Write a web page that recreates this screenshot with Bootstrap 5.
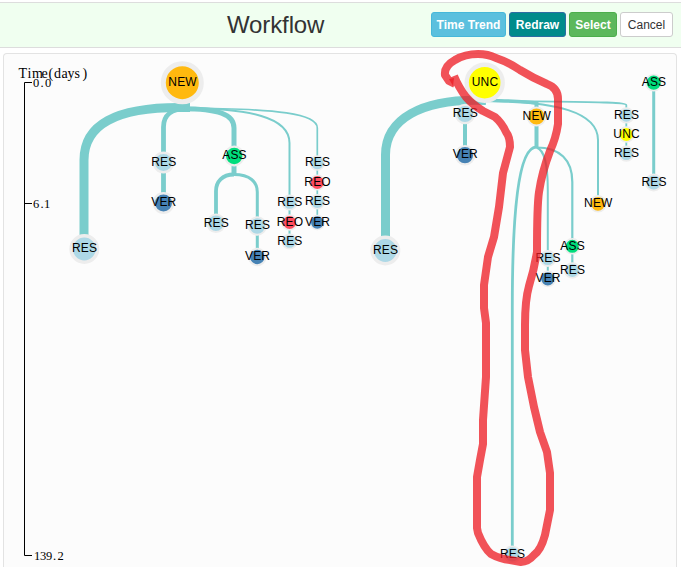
<!DOCTYPE html>
<html lang="en">
<head>
<meta charset="utf-8">
<meta name="viewport" content="width=device-width, initial-scale=1">
<title>Workflow</title>
<link href="https://cdn.jsdelivr.net/npm/bootstrap@5.3.0/dist/css/bootstrap.min.css" rel="stylesheet">
<style>
body{font-family:"Liberation Sans",Arial,sans-serif;color:#333;background:#fff}
.flow-page{height:567px;padding-top:2px}
.flow-head{height:46px;background:#f0fff0;border-top:1px solid #ddd;border-bottom:1px solid #ddd;padding:0 8px 0 227px}
.flow-head h1{font-size:24px;line-height:26px;font-weight:400;letter-spacing:-.12px}
.flow-btns{gap:3px;margin-bottom:2px}
.flow-btns .btn{font-size:12px;line-height:15px;height:25px;padding:3px 0 0;border-radius:3px;display:block}
.b-trend{width:75px;background:#5bc0de!important;border-color:#46b8da!important;color:#fff!important}
.b-redraw{width:57px;background:#008b8b!important;border-color:#2e6da4!important;color:#fff!important}
.b-select{width:48px;background:#5cb85c!important;border-color:#4cae4c!important;color:#fff!important}
.b-cancel{width:53px;background:#fff!important;border-color:#ccc!important;color:#333!important}
.flow-panel{margin:5px 4px 0 3px;height:514px;background:#fcfcfc;border:1px solid #e3e3e3;border-bottom:0;border-radius:4px 4px 0 0}
.flow-panel svg{display:block;overflow:visible}
.links path{fill:none;stroke:#7acdcc}
.nodes circle{stroke:#ededed}
.labels text{font-size:12px;text-anchor:middle;fill:#000}
.res{fill:#add8e6}.ver{fill:#4682b4}.new{fill:#ffb90f}.ass{fill:#00dd7c}.reo{fill:#ff4d5e}.unc{fill:#ff0}
.axis path{fill:none;stroke:#000}
.axis text{fill:#000;font-family:"Liberation Serif",serif;font-size:12.5px}
.axis .axis-title{font-size:14px}
</style>
</head>
<body>
<div class="flow-page">
<header class="flow-head d-flex align-items-center justify-content-between">
  <h1 class="mb-0">Workflow</h1>
  <div class="flow-btns d-flex">
    <button class="btn btn-info fw-bold b-trend">Time Trend</button>
    <button class="btn btn-primary fw-bold b-redraw">Redraw</button>
    <button class="btn btn-success fw-bold b-select">Select</button>
    <button class="btn btn-light b-cancel">Cancel</button>
  </div>
</header>
<main class="flow-panel">
<svg width="672" height="513" viewBox="4 54 672 513">
  <g class="axis">
    <path d="M32 82.5H24.5V555.5H32M24.5 203.5H32"/>
    <text class="axis-title" x="18.5 27.5 32 41.5 48.5 54 61.5 67.5 74.5 82.5" y="78">Time(days)</text>
    <text x="33 40.5 45" y="87">0.0</text>
    <text x="33 40.5 44" y="208">6.1</text>
    <text x="34 40 46 53 57.5" y="560">139.2</text>
  </g>
  <g class="links">
    <path stroke-width="9" d="M190 107.5H182C115 107 84 125 84 160V236"/>
    <path stroke-width="4.8" d="M186 108.7C172 108.7 163.5 115 163.5 127V195"/>
    <path stroke-width="5" d="M182 108.7C218 108.7 234 114 234 128V174"/>
    <path stroke-width="2" d="M182 108C250 108.5 289.5 117 289.5 143V240"/>
    <path stroke-width="1.7" d="M182 108C280 108.5 317.3 114 317.3 128V220"/>
    <path stroke-width="3.8" d="M234 174.5C222 174.5 216 182 216 191V218"/>
    <path stroke-width="3" d="M234 174.5C250 174.5 257.3 182 257.3 192V252"/>
    <path stroke-width="9" d="M486 100.5C420 98 385.5 120 385.5 155V238"/>
    <path stroke-width="4" d="M465 115V150"/>
    <path stroke-width="3.5" d="M480 100C505 101 522 101 537 103"/>
    <path stroke-width="1.8" d="M486 100.3C560 102.3 626.3 101 626.3 105V150"/>
    <path stroke-width="2" d="M486 100.5C556 101.5 598 112 598 140V198"/>
    <path stroke-width="4" d="M536.5 102V148"/>
    <path stroke-width="2.8" d="M536.5 147C518 147 512.3 215 512.3 308V550"/>
    <path stroke-width="2" d="M536.5 147.5C544 150 547.8 162 547.8 190V275"/>
    <path stroke-width="2.2" d="M536.5 147.5C560 147.5 572.3 160 572.3 182V268"/>
    <path stroke-width="3" d="M653.7 84V178"/>
  </g>
  <g class="nodes" id="nodes"></g>
  <g class="labels" id="labels"></g>
  <path fill="none" stroke="#ed1c24" stroke-opacity=".76" stroke-width="8" stroke-linejoin="round" d="M455 84L449 81L445 75Q444 66 455 60Q465 54 478 54Q488 54 496 58Q508 62 520 70Q533 78 547 84Q558 88 558 99V124Q556 138 550 151Q542 172 539 192Q537 205 537 252Q534 270 529 286Q525 300 525 325V350L528 377L534 407L540 432L547 452L550 473V510L545 535Q541 550 534 555Q528 562 521 562L510 560Q500 559 491 554Q484 548 478 533L477 528V477L480 460L483 444V420L486 377V323L484 308V285L488 257L494 237L499 207L503 173L510 147Q510 137 506 132Q502 123 495 117L483 111Q473 105 466 97Q459 88 454 76"/>
  <path fill="#ed1c24" fill-opacity=".76" d="M449 79L454 78L453 86Z"/>
</svg>
</main>
</div>
<script>
// type, x, y, radius, ring width
const nodes=[
["NEW",182.3,82.7,19,5],["RES",84.3,249,13.2,3.6],["RES",163.5,162.5,9.7,2.4],["VER",163.5,203,9.7,2.4],
["ASS",234.2,156,9.3,2.2],["RES",216,223.3,8.7,2],["RES",257.3,226,8.7,2],["VER",257.3,257,8.2,2],
["RES",289.6,202.5,7.2,1.8],["REO",289.6,222.5,7.4,1.8],["RES",289.6,241.5,7.2,1.8],
["RES",317.3,163,7,1.6],["REO",317.3,182.5,7.3,1.6],["RES",317.3,201.8,7,1.6],["VER",317.3,222.5,7,1.6],
["UNC",484.7,82.7,18,4.4],["RES",385.3,250.5,13.2,3.6],["RES",465,114,9.2,2.2],["VER",465,155.2,9.2,2.2],
["NEW",536.5,116.5,9,2],["RES",626.3,115.4,7.2,1.8],["UNC",626.3,134.5,7.4,1.8],["RES",626.3,153.7,7.2,1.8],
["ASS",653.7,82.7,8,1.8],["RES",653.7,182.5,8,1.8],["NEW",598,203.8,7.8,1.8],
["ASS",572.3,246.3,7.4,1.8],["RES",572.3,270.5,7.4,1.8],["RES",547.8,258.5,7.5,1.8],["VER",547.8,278.8,7.5,1.8],
["RES",512.3,554.4,8,1.8]];
let c="",t="";
for(const [n,x,y,r,w] of nodes){
  c+=`<circle class="${n.toLowerCase()}" cx="${x}" cy="${y}" r="${r}" stroke-width="${w}"/>`;
  t+=`<text x="${x+.3}" y="${Math.round(y+3.2)}" letter-spacing=".15">${n}</text>`;
}
document.getElementById("nodes").innerHTML=c;
document.getElementById("labels").innerHTML=t;
</script>
<script src="https://cdn.jsdelivr.net/npm/bootstrap@5.3.0/dist/js/bootstrap.bundle.min.js"></script>
</body>
</html>
